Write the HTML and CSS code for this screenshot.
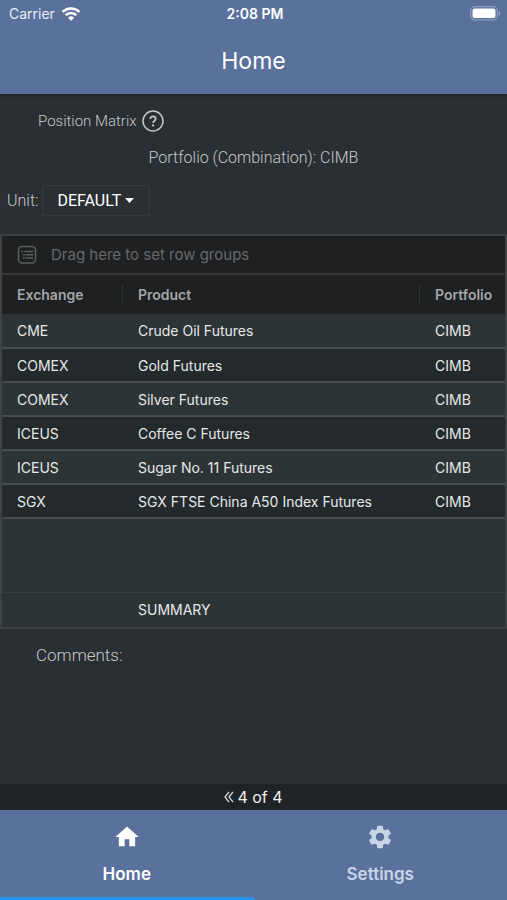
FILE: index.html
```html
<!DOCTYPE html>
<html lang="en">
<head>
<meta charset="utf-8">
<meta name="viewport" content="width=device-width, initial-scale=1">
<title>Home</title>
<link rel="stylesheet" href="styles.css">
</head>
<body>
<header class="header">
  <div class="status">
    <div class="carrier">
      <span>Carrier</span>
      <svg width="20" height="16" viewBox="0 0 20 16" fill="none" stroke="#fff" stroke-width="2.6" aria-hidden="true">
        <path d="M1.6 5.9A12 12 0 0 1 18.4 5.9"/>
        <path d="M4.7 9.2A7.5 7.5 0 0 1 15.3 9.2"/>
        <path d="M10 14.9L7.1 11.8A4.1 4.1 0 0 1 12.9 11.8Z" fill="#fff" stroke="none"/>
      </svg>
    </div>
    <span class="time">2:08 PM</span>
    <svg class="battery" width="31" height="15" viewBox="0 0 31 15" aria-hidden="true">
      <rect x=".7" y=".7" width="26.6" height="13.2" rx="4" fill="none" stroke="#8c9dc0" stroke-width="1.2"/>
      <rect x="2.5" y="2.5" width="23" height="9.6" rx="2.2" fill="#fff"/>
      <path d="M28.7 5v4.8c2-1 2-3.800 0-4.800z" fill="#a3b1cd"/>
    </svg>
  </div>
  <h1 class="title">Home</h1>
</header>

<main class="main">
  <div class="matrix-head">
    <h2 class="matrix-title">Position Matrix</h2>
    <button class="help" type="button" aria-label="Help">
      <svg width="22" height="22" viewBox="0 0 22 22" fill="none" stroke="#c3c6c8" aria-hidden="true">
        <circle cx="11" cy="11" r="10" stroke-width="1.500"/>
        <path d="M8.300 9C8.300 7.300 9.400 6.300 11 6.300s2.700 1 2.700 2.500c0 2-2.600 2.200-2.600 4.200" stroke-width="1.700"/>
        <circle cx="11.100" cy="15.400" r="1.100" fill="#c3c6c8" stroke="none"/>
      </svg>
    </button>
  </div>
  <p class="portfolio">Portfolio (Combination): CIMB</p>
  <div class="unit-row">
    <label for="unit">Unit:</label>
    <div class="select-box">
      <select id="unit" class="unit-select"><option>DEFAULT</option></select>
      <svg class="caret" width="9" height="5" viewBox="0 0 9 5" aria-hidden="true"><path d="M0 0h9L4.500 5z" fill="#fff"/></svg>
    </div>
  </div>

  <section class="grid">
    <div class="group-panel">
      <svg width="20" height="20" viewBox="0 0 20 20" fill="none" stroke="#5d5f61" stroke-width="1.5" aria-hidden="true">
        <rect x="1.500" y="1.500" width="17" height="16.500" rx="3.500"/>
        <path d="M4 6.500h2M7.500 6.500h8.500M6 9.800h2M9 9.800h7M6 13h2M9 13h7"/>
      </svg>
      <span>Drag here to set row groups</span>
    </div>
    <table class="table">
      <colgroup><col class="col-exchange"><col class="col-product"><col></colgroup>
      <thead>
        <tr><th scope="col"><div>Exchange</div></th><th scope="col"><div>Product</div></th><th scope="col"><div>Portfolio</div></th></tr>
      </thead>
      <tbody>
        <tr><td>CME</td><td>Crude Oil Futures</td><td>CIMB</td></tr>
        <tr><td>COMEX</td><td>Gold Futures</td><td>CIMB</td></tr>
        <tr><td>COMEX</td><td>Silver Futures</td><td>CIMB</td></tr>
        <tr><td>ICEUS</td><td>Coffee C Futures</td><td>CIMB</td></tr>
        <tr><td>ICEUS</td><td>Sugar No. 11 Futures</td><td>CIMB</td></tr>
        <tr><td>SGX</td><td>SGX FTSE China A50 Index Futures</td><td>CIMB</td></tr>
      </tbody>
      <tfoot>
        <tr class="spacer"><td colspan="3"></td></tr>
        <tr class="summary"><td></td><td>SUMMARY</td><td></td></tr>
      </tfoot>
    </table>
  </section>
  <p class="comments">Comments:</p>
</main>

<div class="pager">
  <button class="prev" type="button" aria-label="Previous page">
    <svg width="10" height="12" viewBox="0 0 10 12" fill="none" stroke="#d8dadb" stroke-width="1.300" aria-hidden="true"><path d="M5 .8L1 6l4 5.200M9 .8L5 6l4 5.200"/></svg>
  </button>
  <span>4 of 4</span>
</div>

<nav class="tabs">
  <a class="tab active" href="#home">
    <svg width="28" height="28" viewBox="0 0 24 24" fill="currentColor" aria-hidden="true"><path d="M10 20v-6h4v6h5v-8h3L12 3 2 12h3v8z"/></svg>
    <span>Home</span>
  </a>
  <a class="tab" href="#settings">
    <svg width="28" height="28" viewBox="0 0 24 24" fill="currentColor" aria-hidden="true"><path d="M19.140 12.940c.04-.3.060-.61.060-.94 0-.32-.02-.64-.07-.94l2.030-1.580c.18-.14.230-.41.120-.61l-1.920-3.320c-.12-.22-.37-.29-.59-.22l-2.390.96c-.5-.38-1.030-.7-1.620-.94l-.36-2.540c-.04-.24-.24-.41-.48-.41h-3.840c-.24 0-.43.17-.47.41l-.36 2.540c-.59.24-1.130.57-1.620.94l-2.390-.96c-.22-.08-.47 0-.59.22L2.740 8.870c-.12.21-.08.47.12.61l2.030 1.580c-.05.3-.09.63-.09.94s.02.64.07.94l-2.030 1.580c-.18.14-.23.41-.12.61l1.920 3.320c.12.22.37.29.59.22l2.390-.96c.5.38 1.030.7 1.620.94l.36 2.540c.05.24.24.41.48.41h3.840c.24 0 .44-.17.47-.41l.36-2.540c.59-.24 1.130-.56 1.620-.94l2.390.96c.22.08.47 0 .59-.22l1.920-3.320c.12-.22.070-.47-.12-.61l-2.010-1.580zM12 15.600c-1.980 0-3.600-1.620-3.600-3.600s1.620-3.600 3.600-3.600 3.600 1.620 3.600 3.600-1.620 3.600-3.600 3.600z"/></svg>
    <span>Settings</span>
  </a>
</nav>
</body>
</html>
```

FILE: styles.css
```css
* { box-sizing: border-box; }

body {
  margin: 0;
  min-height: 100vh;
  display: flex;
  flex-direction: column;
  background: #2a2f33;
  color: #c5c8ca;
  font-family: Roboto, sans-serif;
  font-size: 16px;
}

h1, h2, p { margin: 0; font-weight: 300; }

button { padding: 0; background: none; border: 0; color: inherit; font: inherit; }

.header {
  padding-bottom: 16px;
  background: #5a719c;
  box-shadow: 0 1px 4px #171a20;
  color: #fff;
  font-family: Inter, sans-serif;
}

.status {
  display: grid;
  grid-template-columns: 1fr auto 1fr;
  align-items: center;
  height: 27px;
  padding: 0 6px 0 9px;
  font-size: 14px;
}

.carrier { display: flex; align-items: center; gap: 6px; color: #e8edf6; }
.time { font-weight: 600; }
.battery { justify-self: end; }

.title {
  padding-top: 17px;
  font-size: 23px;
  font-weight: 400;
  line-height: 34px;
  text-align: center;
}

.main { flex: 1; }

.matrix-head {
  display: flex;
  align-items: center;
  gap: 5px;
  padding: 16px 38px 0;
}

.matrix-title { font-size: 15px; }

.help { display: flex; }

.portfolio { padding-top: 16px; line-height: 20px; text-align: center; }

.unit-row {
  display: flex;
  align-items: center;
  gap: 4px;
  padding: 17px 7px 18px;
  font-weight: 300;
}

.select-box { display: grid; align-items: center; width: 108px; }

.unit-select {
  grid-area: 1 / 1;
  height: 31px;
  padding: 0 14px;
  appearance: none;
  background: transparent;
  border: 1px solid #34393d;
  color: #fff;
  font: 400 16px Roboto, sans-serif;
}

.caret {
  grid-area: 1 / 1;
  justify-self: end;
  margin-right: 16px;
  pointer-events: none;
}

.grid {
  border: 2px solid #3f4142;
  background: #2d3436;
  font-family: Inter, sans-serif;
  font-size: 14px;
}

.group-panel {
  display: flex;
  align-items: center;
  gap: 14px;
  height: 39px;
  padding-left: 15px;
  background: #1e2021;
  border-bottom: 2px solid #353738;
  color: #66686a;
  font-size: 15px;
}

.table { width: 100%; border-collapse: collapse; table-layout: fixed; }
.col-exchange { width: 121px; }
.col-product { width: 297px; }

.table th {
  height: 39px;
  padding: 0;
  background: #1e2021;
  color: #a4a6a7;
  font-weight: 600;
  text-align: left;
}

.table th div {
  padding-left: 15px;
  border-right: 1px solid #303334;
  line-height: 20px;
}

.table th:last-child div { border: 0; }

.table td { height: 34px; padding: 0 0 0 15px; color: #e5e8e8; white-space: nowrap; }
.table tbody td { border-bottom: 2px solid #484d4f; }
.table tbody tr:nth-child(even) { background: #242a2c; }
.table .spacer td { height: 74px; border-bottom: 1px solid #383e40; }
.table .summary td { height: 35px; }

.comments { padding: 15px 36px; font-size: 17px; line-height: 22px; }

.pager {
  display: flex;
  align-items: center;
  justify-content: center;
  gap: 3px;
  height: 26px;
  background: #1f2325;
  color: #f0f1f1;
  font-family: Inter, sans-serif;
}

.prev { display: flex; }

.tabs { display: grid; grid-template-columns: 1fr 1fr; background: #5a719c; }

.tab {
  display: flex;
  flex-direction: column;
  align-items: center;
  gap: 11px;
  height: 90px;
  padding-top: 13px;
  border-bottom: 3px solid transparent;
  color: #c8d5e8;
  font: 600 17px/24px Inter, sans-serif;
  text-decoration: none;
}

.tab.active { border-color: #2591e8; color: #fff; }
```
